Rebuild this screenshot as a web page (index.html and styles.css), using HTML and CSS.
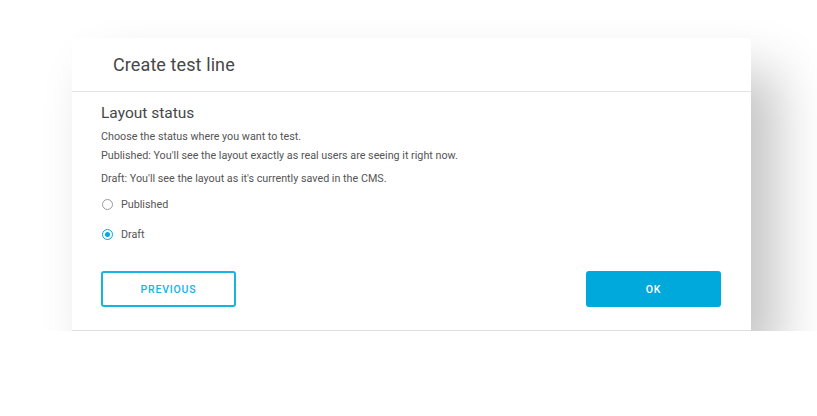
FILE: index.html
```html
<!DOCTYPE html>
<html>
<head>
<meta charset="utf-8">
<link rel="stylesheet" href="styles.css">
</head>
<body>
<div class="card">
  <div class="card-header">
    <h1 class="title">Create test line</h1>
  </div>
  <div class="card-body">
    <h2 class="section-title">Layout status</h2>
    <p class="text t1">Choose the status where you want to test.</p>
    <p class="text t2">Published: You'll see the layout exactly as real users are seeing it right now.</p>
    <p class="text t3">Draft: You'll see the layout as it's currently saved in the CMS.</p>
    <div class="options">
      <label class="option"><span class="radio"></span><span class="opt-label">Published</span></label>
      <label class="option"><span class="radio checked"></span><span class="opt-label">Draft</span></label>
    </div>
    <div class="actions">
      <button class="btn btn-outline">PREVIOUS</button>
      <button class="btn btn-primary">OK</button>
    </div>
  </div>
</div>
</body>
</html>
```
FILE: styles.css
```css
html, body {
  margin: 0;
  padding: 0;
  background: #ffffff;
}
body {
  font-family: Roboto, "Liberation Sans", sans-serif;
  color: #444;
  padding: 38px 0 0 72px;
}
.card {
  width: 679px;
  height: 293px;
  box-sizing: border-box;
  background: #fff;
  border-bottom: 1px solid #e0e0e0;
  box-shadow: 26px 34px 50px rgba(0, 0, 0, 0.24);
  display: flex;
  flex-direction: column;
}
.card-header {
  height: 54px;
  box-sizing: border-box;
  border-bottom: 1px solid #e4e4e4;
  padding-left: 41px;
  display: flex;
  align-items: center;
}
.title {
  margin: 0;
  font-weight: 400;
  font-size: 18px;
  color: #474747;
  letter-spacing: 0.1px;
}
.card-body {
  padding: 12px 30px 0 29px;
  display: flex;
  flex-direction: column;
}
.section-title {
  margin: 0;
  font-weight: 400;
  font-size: 15.5px;
  line-height: 19px;
  color: #474747;
}
.text {
  margin: 0;
  font-size: 10.75px;
  line-height: 13px;
  color: #555;
}
.t1 { margin-top: 7px; }
.t2 { margin-top: 6px; }
.t3 { margin-top: 10px; }
.options {
  display: flex;
  flex-direction: column;
  gap: 17px;
  margin-top: 13px;
}
.option {
  display: flex;
  align-items: center;
  height: 13px;
  font-size: 10.75px;
  color: #555;
}
.radio {
  width: 11px;
  height: 11px;
  box-sizing: border-box;
  border: 1.5px solid #9a9a9a;
  border-radius: 50%;
  margin-left: 1px;
  margin-right: 8px;
  position: relative;
}
.radio.checked {
  border-color: #00a9dc;
}
.radio.checked::after {
  content: "";
  position: absolute;
  left: 1.5px;
  top: 1.5px;
  width: 5px;
  height: 5px;
  border-radius: 50%;
  background: #00a9dc;
}
.actions {
  display: flex;
  justify-content: space-between;
  margin-top: 30px;
}
.btn {
  width: 135px;
  height: 36px;
  box-sizing: border-box;
  border-radius: 3px;
  font-family: Roboto, "Liberation Sans", sans-serif;
  font-size: 10.5px;
  font-weight: 500;
  letter-spacing: 0.8px;
  cursor: pointer;
}
.btn-outline {
  background: #fff;
  border: 2px solid #14b4e4;
  color: #14b4e4;
}
.btn-primary {
  background: #00a9dc;
  border: none;
  color: #fff;
}
```
